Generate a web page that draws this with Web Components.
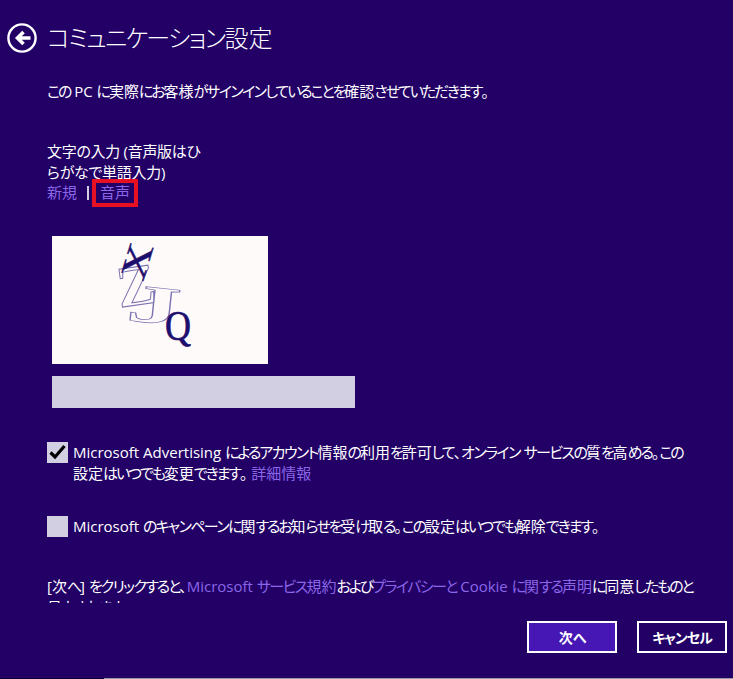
<!DOCTYPE html>
<html lang="ja">
<head>
<meta charset="utf-8">
<title>コミュニケーション設定</title>
<style>
html, body { margin: 0; height: 100%; }
body {
    background: #220066;
    color: #fff;
    font-family: "Open Sans", "Noto Sans CJK JP", sans-serif;
    font-size: 15px;
    font-feature-settings: "palt";
    overflow: hidden;
    --hira: -2.1px;
    --kata: -1.6px;
}
</style>
</head>
<body>
<setup-page>
    <page-title slot="head">コミュニケーション設定</page-title>
    <p-line style="--top:0">この PC に実際にお客様がサインインしていることを確認させていただきます。</p-line>
    <captcha-box></captcha-box>
    <check-row checked style="--top:34px">Microsoft Advertising によるアカウント情報の利用を許可して、オンライン サービスの質を高める。この設定はいつでも変更できます。 <link-text>詳細情報</link-text></check-row>
    <check-row style="--top:32px">Microsoft のキャンペーンに関するお知らせを受け取る。この設定はいつでも解除できます。</check-row>
    <p-line style="--top:39px">[次へ] をクリックすると、<link-text>Microsoft サービス規約</link-text>および<link-text>プライバシーと Cookie に関する声明</link-text>に同意したものと見なされます。</p-line>
    <action-button slot="foot" primary>次へ</action-button>
    <action-button slot="foot">キャンセル</action-button>
</setup-page>
<script>
class KanaRun extends HTMLElement {
    constructor() {
        super();
        this.attachShadow({ mode: 'open' });
        this.shadowRoot.innerHTML = `<style>:host { letter-spacing: var(--kata); } :host([hira]) { letter-spacing: var(--hira); }</style><slot></slot>`;
    }
}

// kana in the original font is much narrower than kanji, so wrap the kana runs
function tightenKana(root) {
    const walker = document.createTreeWalker(root, NodeFilter.SHOW_TEXT);
    const nodes = [];
    while (walker.nextNode()) {
        const parent = walker.currentNode.parentNode.nodeName;
        if (parent !== 'STYLE' && parent !== 'SCRIPT' && parent !== 'KANA-RUN') nodes.push(walker.currentNode);
    }
    nodes.forEach(node => {
        const parts = node.data.split(/([\u3040-\u309f]+|[\u30a0-\u30ff]+)/);
        if (parts.length < 2) return;
        const frag = document.createDocumentFragment();
        parts.forEach((part, i) => {
            if (i % 2) {
                const run = document.createElement('kana-run');
                if (part.charCodeAt(0) < 0x30a0) run.setAttribute('hira', '');
                run.textContent = part;
                frag.appendChild(run);
            } else if (part) {
                frag.appendChild(document.createTextNode(part));
            }
        });
        node.replaceWith(frag);
    });
}

class SetupPage extends HTMLElement {
    constructor() {
        super();
        this.attachShadow({ mode: 'open' });
        this.shadowRoot.innerHTML = `
        <style>
        :host { display: flex; flex-direction: column; height: 679px; box-sizing: border-box; border-bottom: 1px solid #9a96a8; position: relative; }
        header { height: 81px; flex: none; }
        main { height: 522px; flex: none; overflow: hidden; padding: 0 40px 0 47px; box-sizing: border-box; }
        footer { flex: none; display: flex; justify-content: flex-end; gap: 20px; padding: 18px 6px 0 0; }
        .edge { position: absolute; left: 0; bottom: -1px; width: 104px; height: 1px; background: #12003a; }
        </style>
        <header><slot name="head"></slot></header>
        <main><slot></slot></main>
        <footer><slot name="foot"></slot></footer>
        <div class="edge"></div>
        `;
    }
}

class PageTitle extends HTMLElement {
    constructor() {
        super();
        this.attachShadow({ mode: 'open' });
        this.shadowRoot.innerHTML = `
        <style>
        :host { display: flex; align-items: center; gap: 10px; padding: 23px 0 0 7px; }
        svg { width: 30px; height: 30px; flex: none; }
        h1 { margin: -1px 0 0; font-size: 24px; font-weight: 300; line-height: 30px; white-space: nowrap; }
        </style>
        <svg viewBox="0 0 30 30">
            <circle cx="15" cy="15" r="13.6" fill="none" stroke="#fff" stroke-width="2.4"/>
            <path d="M10.5 15 H23.5 M16.5 9 L10.5 15 L16.5 21" fill="none" stroke="#fff" stroke-width="3.6"/>
        </svg>
        <h1><slot></slot></h1>
        `;
    }
}

class PLine extends HTMLElement {
    constructor() {
        super();
        this.attachShadow({ mode: 'open' });
        this.shadowRoot.innerHTML = `
        <style>
        :host { display: block; margin-top: var(--top, 0); line-height: 21px; }
        </style>
        <slot></slot>
        `;
    }
}

class LinkText extends HTMLElement {
    constructor() {
        super();
        this.attachShadow({ mode: 'open' });
        this.shadowRoot.innerHTML = `<style>:host { color: #8a66e8; }</style><slot></slot>`;
    }
}

class CaptchaBox extends HTMLElement {
    constructor() {
        super();
        this.attachShadow({ mode: 'open' });
        this.shadowRoot.innerHTML = `
        <style>
        :host { display: block; }
        .label { width: 160px; margin-top: 39px; line-height: 21px; letter-spacing: -0.3px; }
        .links { display: flex; align-items: center; line-height: 21px; color: #8a66e8; height: 21px; margin-top: -1px; }
        .sep { width: 2px; height: 14px; background: #d3cfe2; margin: 0 11px 0 10px; }
        .audio { position: relative; }
        .audio::after { content: ""; position: absolute; left: -8px; right: -8px; top: -3px; bottom: -4px; border: 4px solid #e81123; box-sizing: border-box; }
        .pic { display: block; margin: 33px 0 0 5px; width: 216px; height: 128px; background: #fffafa; }
        .field { margin: 12px 0 0 5px; width: 303px; height: 32px; background: #d3cfe2; }
        text { font-family: "Liberation Serif", serif; text-anchor: middle; }
        </style>
        <div class="label">文字の入力 (音声版はひらがなで単語入力)</div>
        <div class="links"><span>新規</span><span class="sep"></span><span class="audio">音声</span></div>
        <svg class="pic" viewBox="0 0 216 128">
            <text transform="translate(84 49) rotate(-8)" font-size="58" font-weight="700" fill="#fffafa" stroke="#7a72b0" stroke-width="1" y="20">Z</text>
            <text transform="translate(102 70) rotate(6) scale(2 1)" font-size="54" font-weight="700" fill="#fffafa" stroke="#7a72b0" stroke-width="0.7" y="17">J</text>
            <text transform="translate(85 25) rotate(-73) scale(1.2 0.85)" font-size="42" fill="#1d0f6e" stroke="#1d0f6e" stroke-width="0.5" y="14">X</text>
            <text transform="translate(126 92) scale(1 1.2)" font-size="36" fill="#1d0f6e" stroke="#1d0f6e" stroke-width="0.6" y="10">Q</text>
        </svg>
        <div class="field"></div>
        `;
    }
}

class CheckRow extends HTMLElement {
    constructor() {
        super();
        this.attachShadow({ mode: 'open' });
        const mark = this.hasAttribute('checked')
            ? '<svg viewBox="0 0 21 21"><path d="M3.5 10.5 L8 15 L17.5 4" fill="none" stroke="#000" stroke-width="3.2"/></svg>'
            : '';
        this.shadowRoot.innerHTML = `
        <style>
        :host { display: flex; gap: 5px; margin-top: var(--top, 0); line-height: 21px; }
        .box { flex: none; width: 21px; height: 21px; background: #d3cfe2; }
        svg { display: block; width: 21px; height: 21px; }
        </style>
        <div class="box">${mark}</div>
        <div><slot></slot></div>
        `;
    }
}

class ActionButton extends HTMLElement {
    constructor() {
        super();
        this.attachShadow({ mode: 'open' });
        this.shadowRoot.innerHTML = `
        <style>
        :host { display: flex; align-items: center; justify-content: center; width: 90px; height: 32px; box-sizing: border-box; border: 2px solid #fff; font-weight: 700; font-size: 14px; --kata: -1px; --hira: -1px; }
        :host([primary]) { background: #4617b4; }
        </style>
        <slot></slot>
        `;
    }
}

customElements.define('kana-run', KanaRun);
customElements.define('setup-page', SetupPage);
customElements.define('page-title', PageTitle);
customElements.define('p-line', PLine);
customElements.define('link-text', LinkText);
customElements.define('captcha-box', CaptchaBox);
customElements.define('check-row', CheckRow);
customElements.define('action-button', ActionButton);

tightenKana(document.querySelector('setup-page'));
</script>
</body>
</html>
